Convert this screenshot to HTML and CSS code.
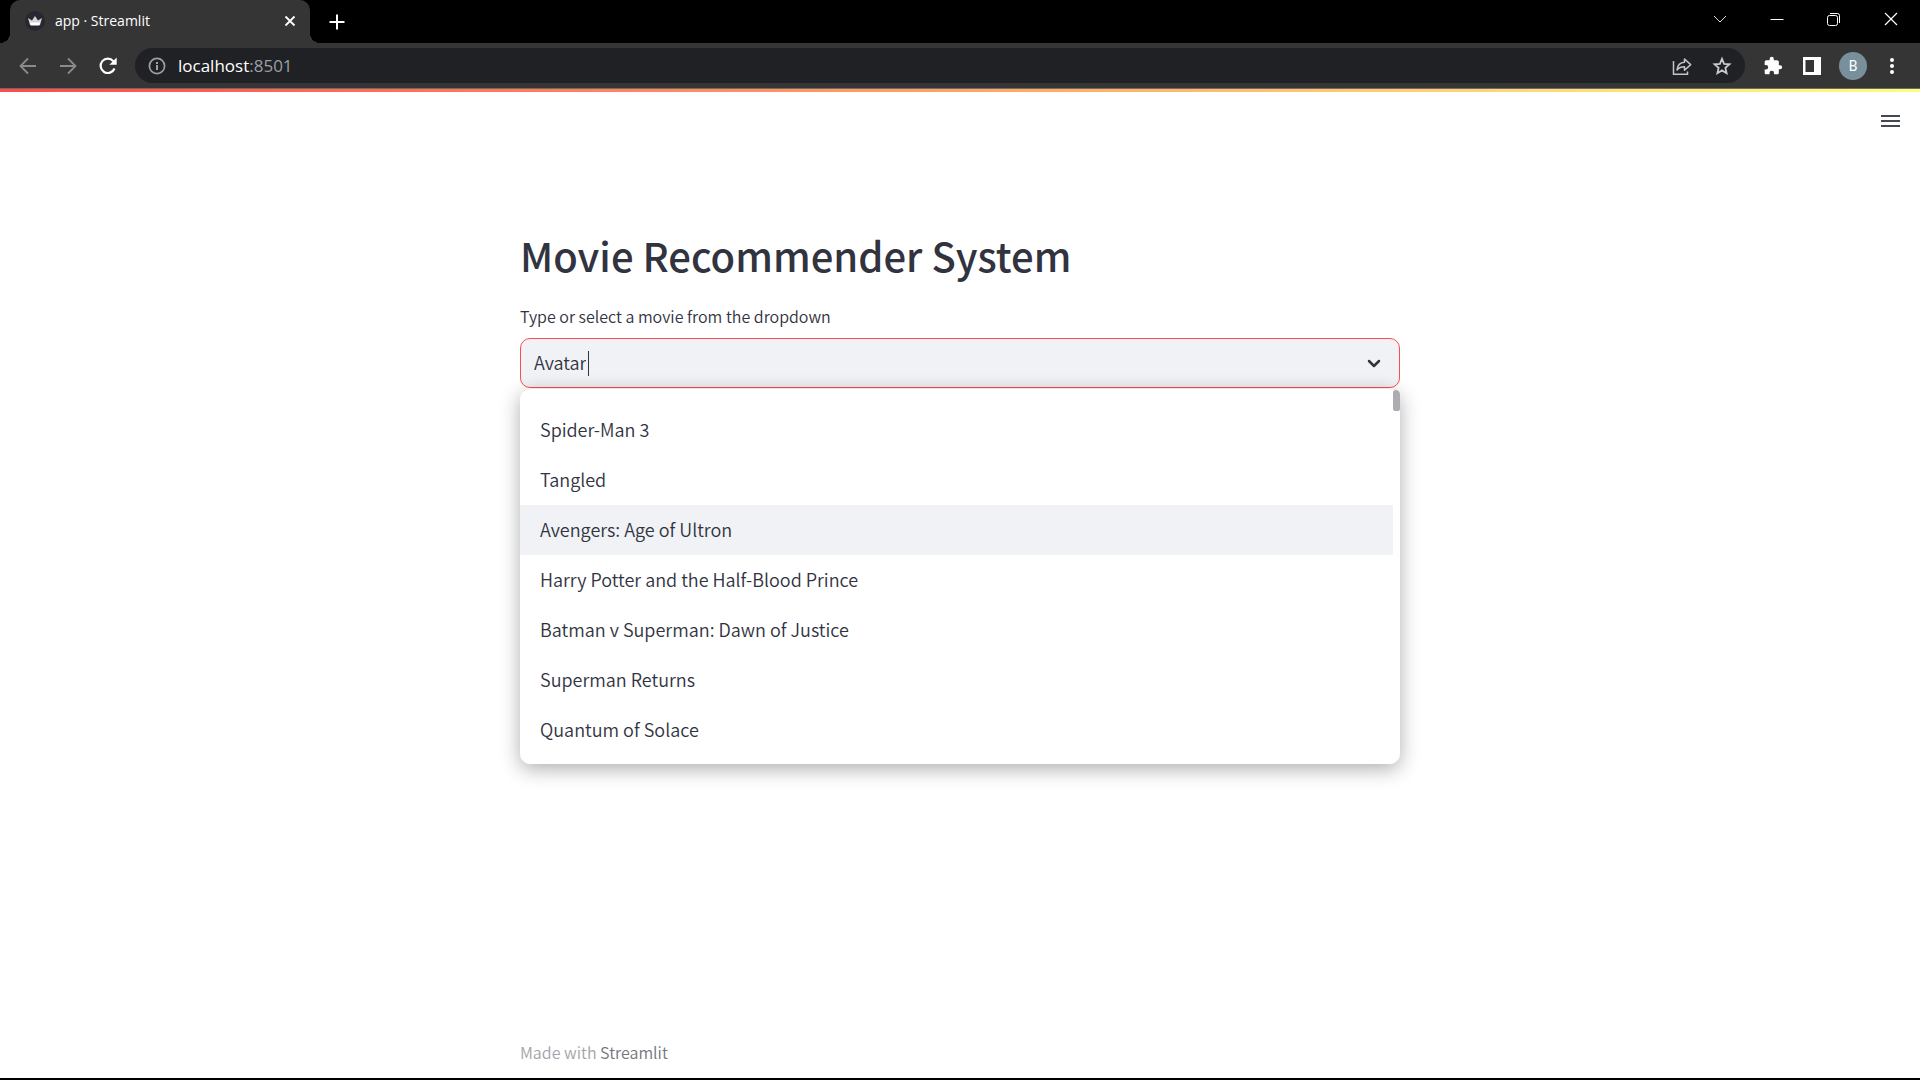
FILE: index.html
```html
<!DOCTYPE html>
<html lang="en">
<head>
<meta charset="utf-8">
<meta name="viewport" content="width=device-width, initial-scale=1">
<title>app · Streamlit</title>
<link rel="stylesheet" href="styles.css">
</head>
<body>
<header class="browser">
  <div class="tabstrip">
    <div class="tab">
      <svg class="favicon" width="20" height="20" viewBox="0 0 20 20"><circle cx="10" cy="10" r="10" fill="#262730"/><path d="M3 7l4 2.500L10 5l3 4.500L17 7l-2 7H5z" fill="#d5d5d8"/><path d="M5 11.500h10l-.7 3H5.700z" fill="#fff"/></svg>
      <span class="tab-title">app · Streamlit</span>
      <button class="icon-btn tab-close" aria-label="Close tab"><svg width="12" height="12" viewBox="0 0 12 12"><path d="M1.500 1.500l9 9m0-9l-9 9" stroke="#fff" stroke-width="1.800" fill="none"/></svg></button>
    </div>
    <button class="icon-btn new-tab" aria-label="New tab"><svg width="16" height="16" viewBox="0 0 16 16"><path d="M8 .5v15M.5 8h15" stroke="#fff" stroke-width="2" fill="none"/></svg></button>
    <div class="window-controls">
      <button class="icon-btn win" aria-label="Search tabs"><svg width="16" height="16" viewBox="0 0 16 16"><path d="M2 5l6 6 6-6" stroke="#ddd" fill="none"/></svg></button>
      <button class="icon-btn win" aria-label="Minimize"><svg width="16" height="16" viewBox="0 0 16 16"><path d="M1.500 8.500h13" stroke="#fff" fill="none"/></svg></button>
      <button class="icon-btn win" aria-label="Restore"><svg width="16" height="16" viewBox="0 0 16 16"><rect x="1.500" y="4.500" width="10" height="10" rx="2" stroke="#fff" fill="none"/><path d="M4 2.500h7.500a2 2 0 0 1 2 2V12" stroke="#fff" fill="none"/></svg></button>
      <button class="icon-btn win" aria-label="Close"><svg width="16" height="16" viewBox="0 0 16 16"><path d="M2 2l12 12m0-12L2 14" stroke="#fff" stroke-width="1.200" fill="none"/></svg></button>
    </div>
  </div>
  <div class="toolbar">
    <div class="nav">
      <button class="icon-btn" aria-label="Back"><svg width="20" height="20" viewBox="0 0 20 20"><path d="M18 10H3m7-7.500L2.500 10l7.500 7.500" stroke="#8b8b8b" stroke-width="1.800" fill="none"/></svg></button>
      <button class="icon-btn" aria-label="Forward"><svg width="20" height="20" viewBox="0 0 20 20"><path d="M2 10h15m-7-7.500l7.500 7.500-7.500 7.500" stroke="#8b8b8b" stroke-width="1.800" fill="none"/></svg></button>
      <button class="icon-btn" aria-label="Reload"><svg width="20" height="20" viewBox="0 0 20 20"><path d="M16.500 12.500a7.200 7.200 0 1 1-1.200-7.400l1.700 1.800" stroke="#fff" stroke-width="2.200" fill="none"/><path d="M18.700 1.500v7.300h-7.300z" fill="#fff"/></svg></button>
    </div>
    <div class="omnibox">
      <svg width="18" height="18" viewBox="0 0 18 18"><circle cx="9" cy="9" r="7.600" stroke="#9aa0a6" stroke-width="1.700" fill="none"/><path d="M9 8v5M9 5v2" stroke="#9aa0a6" stroke-width="2"/></svg>
      <span class="url">localhost<span class="port">:8501</span></span>
      <button class="icon-btn push" aria-label="Share"><svg width="20" height="20" viewBox="0 0 20 20"><path d="M1.500 5v13.200h14V15.500" stroke="#c4c5c7" stroke-width="1.500" fill="none"/><path d="M5 14c.5-5 3.500-7.500 7.500-7.700V3l6.200 5.600-6.200 5.600v-3.400C9.500 10.800 7 11.500 5 14z" stroke="#c4c5c7" stroke-width="1.500" stroke-linejoin="round" fill="none"/></svg></button>
      <button class="icon-btn" aria-label="Bookmark"><svg width="20" height="20" viewBox="0 0 20 20"><path d="M10 2.800l2.100 5 5.400.5-4.100 3.600 1.200 5.300L10 14.400l-4.600 2.800 1.200-5.300-4.100-3.600 5.400-.5z" stroke="#c9cacc" stroke-width="1.800" fill="none"/></svg></button>
    </div>
    <div class="extras">
      <button class="icon-btn" aria-label="Extensions"><svg width="20" height="20" viewBox="0 0 24 24"><path fill="#fff" d="M20.500 11H19V7c0-1.100-.9-2-2-2h-4V3.500a2.500 2.500 0 0 0-5 0V5H4c-1.100 0-2 .9-2 2v3.800h1.500a2.700 2.700 0 0 1 0 5.400H2V20c0 1.100.9 2 2 2h3.800v-1.500a2.700 2.700 0 0 1 5.400 0V22H17c1.100 0 2-.9 2-2v-4h1.500a2.500 2.500 0 0 0 0-5z"/></svg></button>
      <button class="icon-btn" aria-label="Side panel"><svg width="20" height="20" viewBox="0 0 20 20"><path fill="#fff" fill-rule="evenodd" d="M1 1h18v18H1zM3.500 4v12H12V4z"/></svg></button>
      <button class="profile" aria-label="Profile">B</button>
      <button class="icon-btn" aria-label="Menu"><svg width="20" height="20" viewBox="0 0 20 20" fill="#fff"><circle cx="10" cy="4" r="2"/><circle cx="10" cy="10" r="2"/><circle cx="10" cy="16" r="2"/></svg></button>
    </div>
  </div>
</header>
<div class="decoration"></div>
<div class="app-bar">
  <button class="icon-btn" aria-label="App menu"><svg width="20" height="14" viewBox="0 0 20 14"><path d="M0 2h19M0 7h19M0 12h19" stroke="#454754" stroke-width="2"/></svg></button>
</div>
<main class="content">
  <h1 class="title">Movie Recommender System</h1>
  <label class="label" for="movie">Type or select a movie from the dropdown</label>
  <div class="combo">
    <div class="field">
      <input class="field-input" id="movie" type="text" value="Avatar" role="combobox" aria-expanded="true" aria-controls="movies">
      <span class="caret"></span>
      <svg class="push" width="20" height="20" viewBox="0 0 20 20"><path d="M5 8l5 5 5-5" stroke="#31333f" stroke-width="2.500" stroke-linecap="round" stroke-linejoin="round" fill="none"/></svg>
    </div>
    <div class="menu">
      <ul class="options" id="movies" role="listbox" aria-label="Movies">
        <li class="option" role="option">Spider-Man 3</li>
        <li class="option" role="option">Tangled</li>
        <li class="option option-active" role="option" aria-selected="true">Avengers: Age of Ultron</li>
        <li class="option" role="option">Harry Potter and the Half-Blood Prince</li>
        <li class="option" role="option">Batman v Superman: Dawn of Justice</li>
        <li class="option" role="option">Superman Returns</li>
        <li class="option" role="option">Quantum of Solace</li>
      </ul>
      <div class="thumb"></div>
    </div>
  </div>
</main>
<footer class="footer">Made with <a class="footer-link" href="#">Streamlit</a></footer>
</body>
</html>
```
FILE: styles.css
```css
* { box-sizing: border-box; }

body {
  margin: 0;
  min-height: 100vh;
  display: flex;
  flex-direction: column;
  background: #fff;
  border-bottom: 2px solid #000;
  color: #31333f;
  font-family: "Noto Sans CJK SC", "Noto Sans", sans-serif;
  font-size: 18px;
  font-weight: 350;
}

.icon-btn {
  display: flex;
  align-items: center;
  justify-content: center;
  padding: 0;
  border: 0;
  background: none;
}

.push { margin-left: auto; }

/* Browser frame */
.browser {
  background: #000;
  color: #fff;
  font-family: "Open Sans", sans-serif;
  font-weight: 400;
}

.tabstrip {
  display: flex;
  height: 43px;
  padding-left: 10px;
}

.tab {
  position: relative;
  display: flex;
  align-items: center;
  gap: 10px;
  width: 300px;
  padding: 0 14px 1px 15px;
  border-radius: 10px 10px 0 0;
  background: #353535;
}

.tab::before,
.tab::after {
  content: "";
  position: absolute;
  bottom: 0;
  width: 10px;
  height: 10px;
}

.tab::before {
  left: -10px;
  background: radial-gradient(circle at 0 0, #000 10px, #353535 10px);
}

.tab::after {
  right: -10px;
  background: radial-gradient(circle at 100% 0, #000 10px, #353535 10px);
}

.tab-title {
  flex: 1;
  font-size: 14px;
  line-height: 20px;
}

.new-tab { width: 54px; }

.window-controls {
  display: flex;
  margin-left: auto;
  padding-right: 1px;
}

.win {
  width: 57px;
  height: 37px;
}

.toolbar {
  display: flex;
  align-items: center;
  height: 46px;
  padding-right: 18px;
  border-bottom: 1px solid #6b6b6b;
  background: #353535;
}

.nav {
  display: flex;
  gap: 20px;
  padding: 0 17px 0 18px;
}

.omnibox {
  flex: 1;
  display: flex;
  align-items: center;
  gap: 12px;
  height: 35px;
  padding: 0 13px;
  border-radius: 18px;
  background: #202124;
}

.omnibox .push + .icon-btn { margin-left: 8px; }

.url {
  font-size: 17px;
  line-height: 24px;
}

.port { color: #9aa0a6; }

.extras {
  display: flex;
  align-items: center;
  gap: 19px;
  padding-left: 18px;
}

.extras .profile { margin: 0 -4px 0 -2px; }

.profile {
  width: 28px;
  height: 28px;
  padding: 0;
  border: 0;
  border-radius: 50%;
  background: #78909c;
  color: #fff;
  font-family: Roboto, sans-serif;
  font-size: 14px;
}

/* App */
.decoration {
  height: 3px;
  background: linear-gradient(90deg, #ff4b4b, #fffd80);
}

.app-bar {
  display: flex;
  justify-content: flex-end;
  padding: 22px 19px;
}

.content {
  flex: 1;
  width: 100%;
  max-width: 880px;
  margin: 0 auto;
  padding-top: 72px;
}

.title {
  margin: 0;
  font-size: 40px;
  font-weight: 500;
  line-height: 66px;
}

.label {
  display: block;
  margin: 16px 0 10px;
  font-size: 16px;
  line-height: 24px;
}

.combo { position: relative; }

.field {
  display: flex;
  align-items: center;
  height: 50px;
  padding: 0 15px 0 13px;
  border: 1px solid #ff4b4b;
  border-radius: 10px;
  background: #f0f2f6;
}

.field-input {
  field-sizing: content;
  padding: 0 0 2px;
  border: 0;
  outline: 0;
  background: none;
  color: inherit;
  font: inherit;
}

.caret {
  width: 1px;
  height: 25px;
  margin-left: 2px;
  background: #31333f;
}

.menu {
  position: absolute;
  top: 100%;
  left: 0;
  right: 0;
  margin-top: 1px;
  border-radius: 10px;
  background: #fff;
  box-shadow: 0 5px 20px rgba(0, 0, 0, 0.32);
}

.options {
  margin: 0;
  padding: 16px 7px 9px 0;
  list-style: none;
}

.option {
  padding: 0 20px 2px;
  line-height: 48px;
}

.option-active { background: #f0f2f6; }

.thumb {
  position: absolute;
  top: 1px;
  right: 0;
  width: 7px;
  height: 21px;
  border-radius: 4px 7px 4px 4px;
  background: #adacb1;
}

.footer {
  width: 100%;
  max-width: 880px;
  margin: 0 auto;
  padding: 11px 0 13px;
  color: #a3a4a9;
  font-size: 16px;
  line-height: 26px;
}

.footer-link {
  color: #74757e;
  text-decoration: none;
}
```
